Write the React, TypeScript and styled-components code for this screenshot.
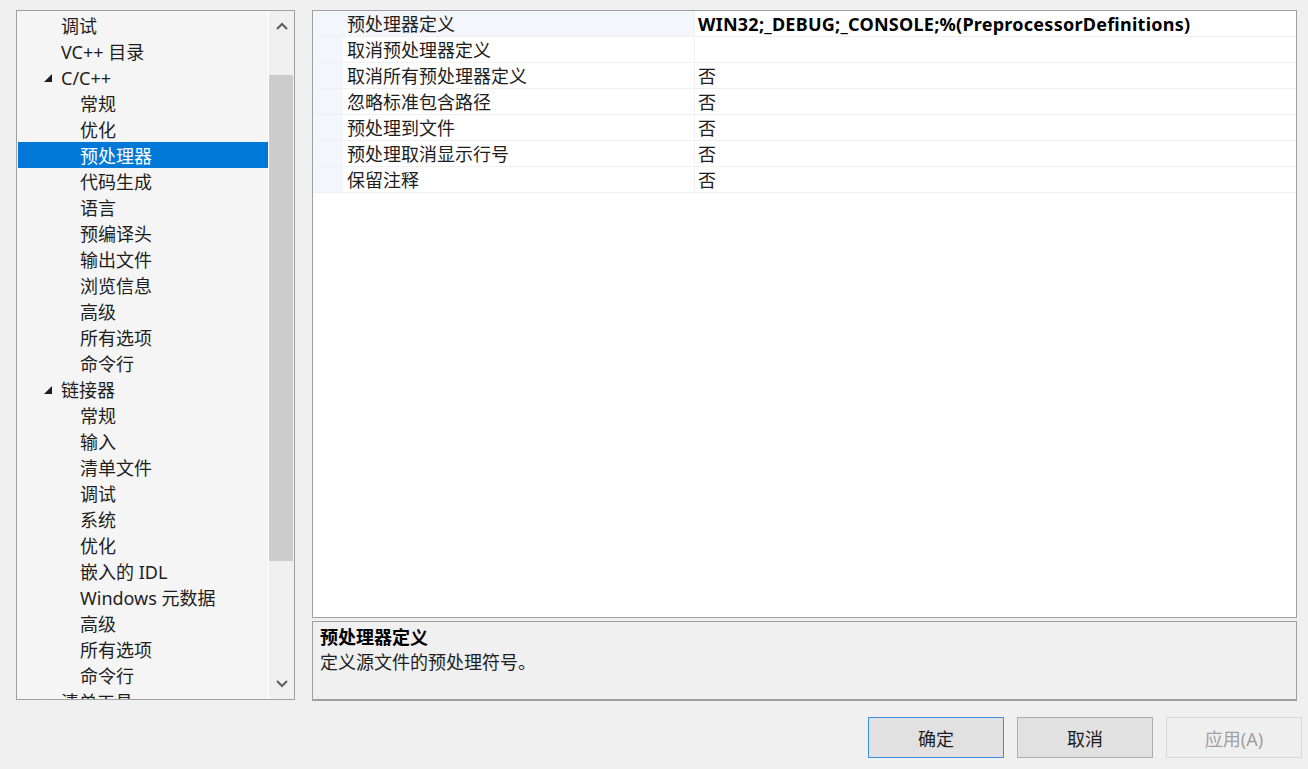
import { styled, createGlobalStyle } from 'styled-components';

const GlobalStyle = createGlobalStyle`
  html, body {
    margin: 0;
    padding: 0;
    background: #f0f0f0;
  }
  * {
    box-sizing: border-box;
  }
`;

const FONT = `"Noto Sans", "Noto Sans CJK SC", sans-serif`;

type TreeItem = {
  label: string;
  level: 1 | 2;
  expander?: 'open' | 'closed';
  selected?: boolean;
};

const treeItems: TreeItem[] = [
  { label: '调试', level: 1 },
  { label: 'VC++ 目录', level: 1 },
  { label: 'C/C++', level: 1, expander: 'open' },
  { label: '常规', level: 2 },
  { label: '优化', level: 2 },
  { label: '预处理器', level: 2, selected: true },
  { label: '代码生成', level: 2 },
  { label: '语言', level: 2 },
  { label: '预编译头', level: 2 },
  { label: '输出文件', level: 2 },
  { label: '浏览信息', level: 2 },
  { label: '高级', level: 2 },
  { label: '所有选项', level: 2 },
  { label: '命令行', level: 2 },
  { label: '链接器', level: 1, expander: 'open' },
  { label: '常规', level: 2 },
  { label: '输入', level: 2 },
  { label: '清单文件', level: 2 },
  { label: '调试', level: 2 },
  { label: '系统', level: 2 },
  { label: '优化', level: 2 },
  { label: '嵌入的 IDL', level: 2 },
  { label: 'Windows 元数据', level: 2 },
  { label: '高级', level: 2 },
  { label: '所有选项', level: 2 },
  { label: '命令行', level: 2 },
  { label: '清单工具', level: 1, expander: 'closed' },
];

const properties = [
  { name: '预处理器定义', value: 'WIN32;_DEBUG;_CONSOLE;%(PreprocessorDefinitions)', bold: true },
  { name: '取消预处理器定义', value: '' },
  { name: '取消所有预处理器定义', value: '否' },
  { name: '忽略标准包含路径', value: '否' },
  { name: '预处理到文件', value: '否' },
  { name: '预处理取消显示行号', value: '否' },
  { name: '保留注释', value: '否' },
];

const Window = styled.div`
  width: 1308px;
  height: 769px;
  padding: 10px 12px 0 16px;
  display: flex;
  flex-direction: column;
  font-family: ${FONT};
  font-size: 18px;
  color: #1e1e1e;
  background: #f0f0f0;
`;

const Main = styled.div`
  display: grid;
  grid-template-columns: 279px 985px;
  column-gap: 17px;
  height: 691px;
`;

const TreePanel = styled.div`
  display: flex;
  height: 690px;
  border: 1px solid #a0a0a0;
  background: #f5f5f5;
  overflow: hidden;
`;

const TreeList = styled.div`
  flex: 1;
  padding: 1px 0 0 1px;
  overflow: hidden;
`;

const TreeRow = styled.div<{ $level: number; $selected?: boolean }>`
  position: relative;
  height: 26px;
  line-height: 26px;
  padding-top: 1px;
  padding-left: ${(p) => (p.$level === 1 ? 43 : 62)}px;
  white-space: nowrap;
  background: ${(p) => (p.$selected ? '#0078d7' : 'transparent')};
  color: ${(p) => (p.$selected ? '#ffffff' : '#1e1e1e')};
`;

const Expander = styled.svg`
  position: absolute;
  left: 26px;
  top: 10px;
`;

const ScrollBar = styled.div`
  width: 26px;
  display: flex;
  flex-direction: column;
  background: #f0f0f0;
  border-left: 1px solid #ffffff;
`;

const ScrollArrow = styled.div`
  height: 30px;
  display: flex;
  align-items: center;
  justify-content: center;
`;

const ScrollTrack = styled.div`
  flex: 1;
  padding-top: 34px;
  padding-bottom: 108px;
  display: flex;
`;

const ScrollThumb = styled.div`
  flex: 1;
  margin-right: 1px;
  background: #cdcdcd;
`;

const RightColumn = styled.div`
  display: flex;
  flex-direction: column;
  gap: 3px;
`;

const PropertyGrid = styled.div`
  height: 608px;
  border: 1px solid #a0a0a0;
  background: #ffffff;
`;

const PropRow = styled.div`
  display: grid;
  grid-template-columns: 30px 352px 1fr;
  height: 26px;
  border-bottom: 1px solid #f0f0f0;
`;

const Gutter = styled.div`
  background: #f3f6fb;
`;

const PropName = styled.div<{ $active?: boolean }>`
  padding: 2px 0 0 4px;
  line-height: 23px;
  white-space: nowrap;
  background: ${(p) => (p.$active ? '#f3f6fb' : '#ffffff')};
  border-right: 1px solid #f0f0f0;
`;

const PropValue = styled.div<{ $bold?: boolean }>`
  padding: 2px 0 0 3px;
  line-height: 23px;
  white-space: nowrap;
  font-weight: ${(p) => (p.$bold ? 700 : 400)};
  letter-spacing: ${(p) => (p.$bold ? '0.25px' : '0')};
  color: ${(p) => (p.$bold ? '#000000' : '#1e1e1e')};
`;

const Description = styled.div`
  height: 80px;
  padding: 3px 7px;
  border: 1px solid #a0a0a0;
  border-bottom-width: 2px;
  background: #f0f0f0;
`;

const DescTitle = styled.div`
  font-weight: 700;
  line-height: 24px;
  color: #000000;
`;

const DescText = styled.div`
  line-height: 26px;
`;

const ButtonBar = styled.div`
  display: flex;
  justify-content: flex-end;
  gap: 13px;
  margin-top: 16px;
  margin-right: -6px;
`;

const Button = styled.button<{ $variant?: 'default' | 'disabled' }>`
  width: 136px;
  height: 41px;
  font-family: ${FONT};
  font-size: 18px;
  color: ${(p) => (p.$variant === 'disabled' ? '#a0a0a0' : '#1e1e1e')};
  background: ${(p) => (p.$variant === 'disabled' ? '#efefef' : '#e1e1e1')};
  border: 1px solid
    ${(p) =>
      p.$variant === 'default' ? '#3b8fe6' : p.$variant === 'disabled' ? '#d9d9d9' : '#adadad'};
  padding: 0;
`;

const Chevron = ({ dir }: { dir: 'up' | 'down' }) => (
  <svg width="12" height="8" viewBox="0 0 12 8">
    <polyline
      points={dir === 'up' ? '1,7 6,2 11,7' : '1,1 6,6 11,1'}
      fill="none"
      stroke="#606060"
      strokeWidth="2.2"
    />
  </svg>
);

const ExpanderIcon = ({ state }: { state: 'open' | 'closed' }) =>
  state === 'open' ? (
    <Expander width="9" height="9" viewBox="0 0 9 9">
      <polygon points="8,0 8,8 0,8" fill="#1e1e1e" />
    </Expander>
  ) : (
    <Expander width="9" height="9" viewBox="0 0 9 9">
      <polygon points="3,1 7,4.5 3,8" fill="none" stroke="#404040" strokeWidth="1" />
    </Expander>
  );

export default function App() {
  return (
    <>
      <GlobalStyle />
      <Window>
        <Main>
          <TreePanel>
            <TreeList>
              {treeItems.map((item, i) => (
                <TreeRow key={i} $level={item.level} $selected={item.selected}>
                  {item.expander && <ExpanderIcon state={item.expander} />}
                  {item.label}
                </TreeRow>
              ))}
            </TreeList>
            <ScrollBar>
              <ScrollArrow>
                <Chevron dir="up" />
              </ScrollArrow>
              <ScrollTrack>
                <ScrollThumb />
              </ScrollTrack>
              <ScrollArrow>
                <Chevron dir="down" />
              </ScrollArrow>
            </ScrollBar>
          </TreePanel>

          <RightColumn>
            <PropertyGrid>
              {properties.map((p, i) => (
                <PropRow key={i}>
                  <Gutter />
                  <PropName $active={i === 0}>{p.name}</PropName>
                  <PropValue $bold={p.bold}>{p.value}</PropValue>
                </PropRow>
              ))}
            </PropertyGrid>
            <Description>
              <DescTitle>预处理器定义</DescTitle>
              <DescText>定义源文件的预处理符号。</DescText>
            </Description>
          </RightColumn>
        </Main>

        <ButtonBar>
          <Button $variant="default">确定</Button>
          <Button>取消</Button>
          <Button $variant="disabled">应用(A)</Button>
        </ButtonBar>
      </Window>
    </>
  );
}
